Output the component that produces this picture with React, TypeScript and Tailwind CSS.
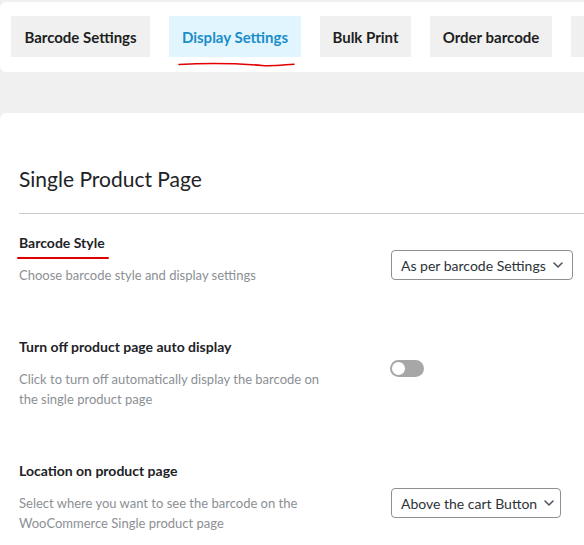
import React, { useState } from 'react'

const tabs = [
  { label: 'Barcode Settings', w: 'w-[139px]' },
  { label: 'Display Settings', w: 'w-[132px]' },
  { label: 'Bulk Print', w: 'w-[91px]' },
  { label: 'Order barcode', w: 'w-[122px]' },
]

function Chevron() {
  return (
    <svg width="12" height="12" viewBox="0 0 12 12" className="shrink-0 text-[#50575e]">
      <path d="M2 4l4 4 4-4" fill="none" stroke="currentColor" strokeWidth="1.6" strokeLinecap="round" strokeLinejoin="round" />
    </svg>
  )
}

function Select({ value, width }: { value: string; width: string }) {
  return (
    <button
      className={`flex items-center justify-between gap-[6px] h-[30px] pl-[9px] pr-[8px] border border-[#8c8f94] rounded-[4px] bg-white text-[14px] text-[#2c3338] ${width}`}
    >
      <span className="whitespace-nowrap">{value}</span>
      <Chevron />
    </button>
  )
}

function Toggle() {
  const [on, setOn] = useState(false)
  return (
    <button
      onClick={() => setOn(!on)}
      className={`relative w-[34px] h-[17px] rounded-full ${on ? 'bg-[#2271b1]' : 'bg-[#a7a7a7]'}`}
    >
      <span
        className={`absolute top-[1px] w-[15px] h-[15px] rounded-full bg-white border border-[#a0a0a0] ${on ? 'left-[18px]' : 'left-[1px]'}`}
      />
    </button>
  )
}

function Row({
  title,
  desc,
  underline,
  control,
  offset,
}: {
  title: string
  desc: string
  underline?: boolean
  control: React.ReactNode
  offset: string
}) {
  return (
    <div className="flex items-start">
      <div className="w-[372px] shrink-0">
        <div className="relative text-[14px] leading-[20px] font-bold text-[#1d2327]">
          {title}
          {underline && (
            <span className="absolute left-[-2px] top-[24px] w-[92px] h-[2px] bg-[#e00000] rounded-full" />
          )}
        </div>
        <p className="mt-[12px] w-[310px] text-[13px] leading-[20px] text-[#8c8f94]">{desc}</p>
      </div>
      <div className={offset}>{control}</div>
    </div>
  )
}

export default function App() {
  return (
    <div className="w-[584px] h-[545px] overflow-hidden bg-[#f0f0f0] font-['Lato',sans-serif]">
      <div className="w-[760px]">
        {/* tabs */}
        <div className="relative mt-[2px] h-[70px] bg-white rounded-[6px] pt-[14px] pl-[11px] flex gap-[19px]">
          {tabs.map((t, i) => (
            <div
              key={t.label}
              className={`${t.w} shrink-0 h-[41px] pt-[2px] flex items-center justify-center text-[15px] font-bold whitespace-nowrap ${
                i === 1 ? 'bg-[#e1f5fe] text-[#1b8dc9]' : 'bg-[#f0f0f0] text-[#1e1e1e]'
              }`}
            >
              {t.label}
            </div>
          ))}
          {/* next tab, cut off by the window edge */}
          <div className="w-[120px] shrink-0 h-[41px] bg-[#f0f0f0]" />
          <svg className="absolute left-[177px] top-[59px]" width="120" height="8" viewBox="0 0 120 8">
            <path
              d="M2 3.5 C 30 2, 60 2.5, 85 4.5 C 95 5.3, 105 4, 117 3.2"
              fill="none"
              stroke="#e00000"
              strokeWidth="1.6"
              strokeLinecap="round"
            />
          </svg>
        </div>

        {/* content */}
        <div className="mt-[41px] bg-white rounded-tl-[6px] h-[460px] pt-[52px] pl-[19px]">
          <h2 className="text-[21px] leading-[28px] font-normal text-[#1d2327]">Single Product Page</h2>
          <div className="mt-[20px] h-px bg-[#cccccc]" />
          <div className="mt-[19px] flex flex-col gap-[52px]">
            <Row
              title="Barcode Style"
              desc="Choose barcode style and display settings"
              underline
              offset="mt-[17px]"
              control={<Select value="As per barcode Settings" width="w-[182px]" />}
            />
            <Row
              title="Turn off product page auto display"
              desc="Click to turn off automatically display the barcode on the single product page"
              offset="mt-[22px] -ml-[1px]"
              control={<Toggle />}
            />
            <Row
              title="Location on product page"
              desc="Select where you want to see the barcode on the WooCommerce Single product page"
              offset="mt-[27px]"
              control={<Select value="Above the cart Button" width="w-[170px]" />}
            />
          </div>
        </div>
      </div>
    </div>
  )
}
